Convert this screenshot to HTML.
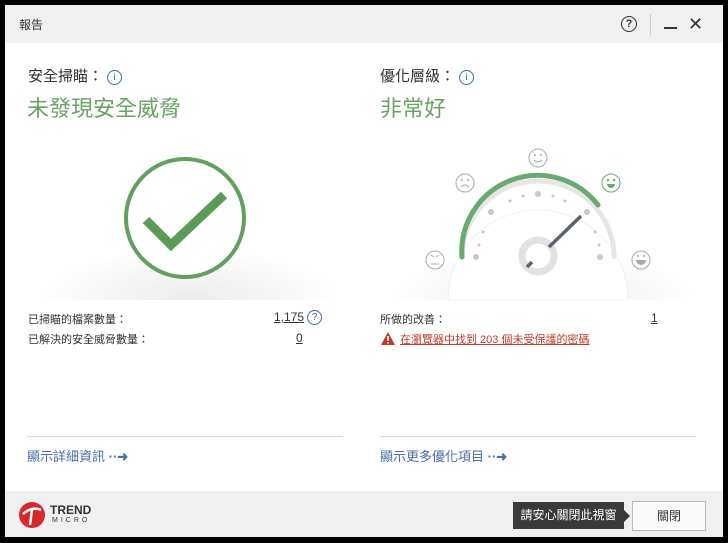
<!DOCTYPE html><html><head><meta charset="utf-8"><style>
body{margin:0;width:728px;height:543px;background:#000;position:relative;overflow:hidden;font-family:"Liberation Sans","Noto Sans CJK TC",sans-serif;}
.win{position:absolute;left:5px;top:5px;width:718px;height:532px;background:#fff;}
.title{position:absolute;left:0;top:0;width:718px;height:38px;background:#f0f0f0;}
.t{position:absolute;font-size:12px;color:#333;white-space:nowrap}
.foot{position:absolute;left:0;top:486px;width:718px;height:46px;background:#f0f0f0;}
.hr{position:absolute;height:1px;background:#d8d8d8;width:316px;top:431px}
.lnk{position:absolute;top:441px;font-size:13px;color:#4a6fa5;}
.g{color:#6aa364;font-size:22px;position:absolute}
.info{display:inline-block;width:13px;height:13px;border:1px solid #3f6aa6;border-radius:50%;color:#3f6aa6;font-size:10px;text-align:center;line-height:13px;font-family:"Liberation Serif",serif;vertical-align:1px;margin-left:4px}
</style></head><body><div class="win">
<div class="title"><div class="t" style="left:14px;top:11px">報告</div>
<div style="position:absolute;left:616px;top:11px;width:14px;height:14px;border:1.5px solid #333;border-radius:50%;font-size:11px;text-align:center;line-height:14px;font-weight:bold;color:#333">?</div>
<div style="position:absolute;left:645px;top:9px;width:1px;height:22px;background:#ccc"></div>
<div style="position:absolute;left:659px;top:22px;width:13px;height:2px;background:#333"></div>
<div style="position:absolute;left:683px;top:9px;font-size:18px;color:#333">✕</div></div>
<div class="t" style="left:23px;top:60px;font-size:15px">安全掃瞄：<span class="info">i</span></div>
<div class="g" style="left:22px;top:86px">未發現安全威脅</div>
<div class="t" style="left:375px;top:60px;font-size:15px">優化層級：<span class="info">i</span></div>
<div class="g" style="left:375px;top:86px">非常好</div>
<div style="position:absolute;left:30px;top:240px;width:310px;height:55px;background:radial-gradient(ellipse at 50% 100%,#ececec,#fff 70%)"></div>
<div style="position:absolute;left:383px;top:240px;width:310px;height:55px;background:radial-gradient(ellipse at 50% 100%,#ececec,#fff 70%)"></div>
<svg style="position:absolute;left:0;top:0" width="718" height="300">
<circle cx="180" cy="213" r="59" fill="#fff" stroke="#62a05e" stroke-width="4"/>
<path d="M141 215 L166 240 L219 190" fill="none" stroke="#5c9a58" stroke-width="9"/>
<path d="M443 295 A90 90 0 0 1 623 295 Z" fill="#fff" stroke="#f0f0f0"/>
<path d="M457 252 A76 76 0 0 1 609 252" fill="none" stroke="#e6e6e6" stroke-width="5" stroke-linecap="round"/>
<path d="M457 252 A76 76 0 0 1 593 200" fill="none" stroke="#6aaa70" stroke-width="5" stroke-linecap="round"/>
<g fill="#c8c8c8"><circle cx="471" cy="252" r="3"/><circle cx="595" cy="252" r="3"/><circle cx="533" cy="189" r="3"/><circle cx="486" cy="207" r="3"/><circle cx="582" cy="207" r="3"/>
<circle cx="478" cy="227" r="1.5"/><circle cx="474" cy="240" r="1.5"/><circle cx="505" cy="196" r="1.5"/><circle cx="518" cy="191" r="1.5"/><circle cx="548" cy="191" r="1.5"/><circle cx="560" cy="196" r="1.5"/><circle cx="590" cy="227" r="1.5"/><circle cx="594" cy="240" r="1.5"/></g>
<circle cx="533" cy="251" r="16" fill="none" stroke="#e2e2e2" stroke-width="7"/>
<line x1="544" y1="242" x2="576" y2="211" stroke="#5a6470" stroke-width="3.5"/>
<line x1="522" y1="262" x2="527" y2="257" stroke="#5a6470" stroke-width="3.5"/>
<g fill="none" stroke="#aaa" stroke-width="1"><circle cx="533" cy="153" r="9"/><circle cx="460" cy="178" r="9"/><circle cx="430" cy="255" r="9"/><circle cx="636" cy="255" r="9"/>
<path d="M529 155 Q533 159 537 155"/><path d="M456 182 Q460 178 464 182"/><path d="M426 259 L434 259"/><path d="M426 250 L429 252 M434 250 L431 252"/></g>
<g fill="#aaa"><circle cx="530" cy="150" r="1"/><circle cx="536" cy="150" r="1"/><circle cx="457" cy="175" r="1"/><circle cx="463" cy="175" r="1"/><path d="M631 255 H641 A5 5 0 0 1 631 255Z"/><circle cx="633" cy="251" r="1"/><circle cx="639" cy="251" r="1"/></g>
<circle cx="606" cy="178" r="9" fill="none" stroke="#6aaa70"/>
<g fill="#6aaa70"><circle cx="603" cy="175" r="1.2"/><circle cx="609" cy="175" r="1.2"/><path d="M602 179 H610 A4 4 0 0 1 602 179Z"/></g>
</svg>
<div class="t" style="left:23px;top:306px;font-size:11px">已掃瞄的檔案數量：</div>
<div class="t" style="left:269px;top:305px;text-decoration:underline">1,175</div>
<div style="position:absolute;left:302px;top:305px;width:13px;height:13px;border:1.5px solid #3f6aa6;border-radius:50%;color:#3f6aa6;font-size:10px;text-align:center;line-height:13px">?</div>
<div class="t" style="left:23px;top:326px;font-size:11px">已解決的安全威脅數量：</div>
<div class="t" style="left:291px;top:326px;text-decoration:underline">0</div>
<div class="t" style="left:375px;top:306px;font-size:11px">所做的改善：</div>
<div class="t" style="left:646px;top:306px;text-decoration:underline">1</div>
<svg style="position:absolute;left:376px;top:327px" width="14" height="13"><path d="M7 0 L14 13 L0 13Z" fill="#c0392b"/><rect x="6.2" y="4" width="1.6" height="5" fill="#fff"/><rect x="6.2" y="10" width="1.6" height="1.6" fill="#fff"/></svg>
<div class="t" style="left:395px;top:326px;font-size:11px;color:#c0392b;text-decoration:underline">在瀏覽器中找到 203 個未受保護的密碼</div>
<div class="hr" style="left:22px"></div><div class="hr" style="left:375px"></div>
<div class="lnk" style="left:22px">顯示詳細資訊 <b>··➜</b></div>
<div class="lnk" style="left:375px">顯示更多優化項目 <b>··➜</b></div>
<div class="foot">
<svg style="position:absolute;left:13px;top:10px" width="28" height="28"><circle cx="14" cy="14" r="13" fill="#d7282f"/><path d="M5 13 Q14 5 23 9 M14 9 L12 24" stroke="#fff" stroke-width="2.5" fill="none"/></svg>
<div class="t" style="left:45px;top:12px;font-size:12px;font-weight:bold;color:#333">TREND</div>
<div class="t" style="left:47px;top:26px;font-size:7px;letter-spacing:3px;color:#333">MICRO</div>
<div style="position:absolute;left:508px;top:11px;width:111px;height:27px;background:#3a3a3a;color:#fff;font-size:12px;line-height:27px;text-align:center">請安心關閉此視窗</div>
<div style="position:absolute;left:619px;top:19px;border-left:6px solid #3a3a3a;border-top:6px solid transparent;border-bottom:6px solid transparent"></div>
<div style="position:absolute;left:627px;top:10px;width:72px;height:28px;border:1px solid #bbb;background:#fafafa;font-size:12px;color:#333;line-height:28px;text-align:center">關閉</div>
</div></div></body></html>
